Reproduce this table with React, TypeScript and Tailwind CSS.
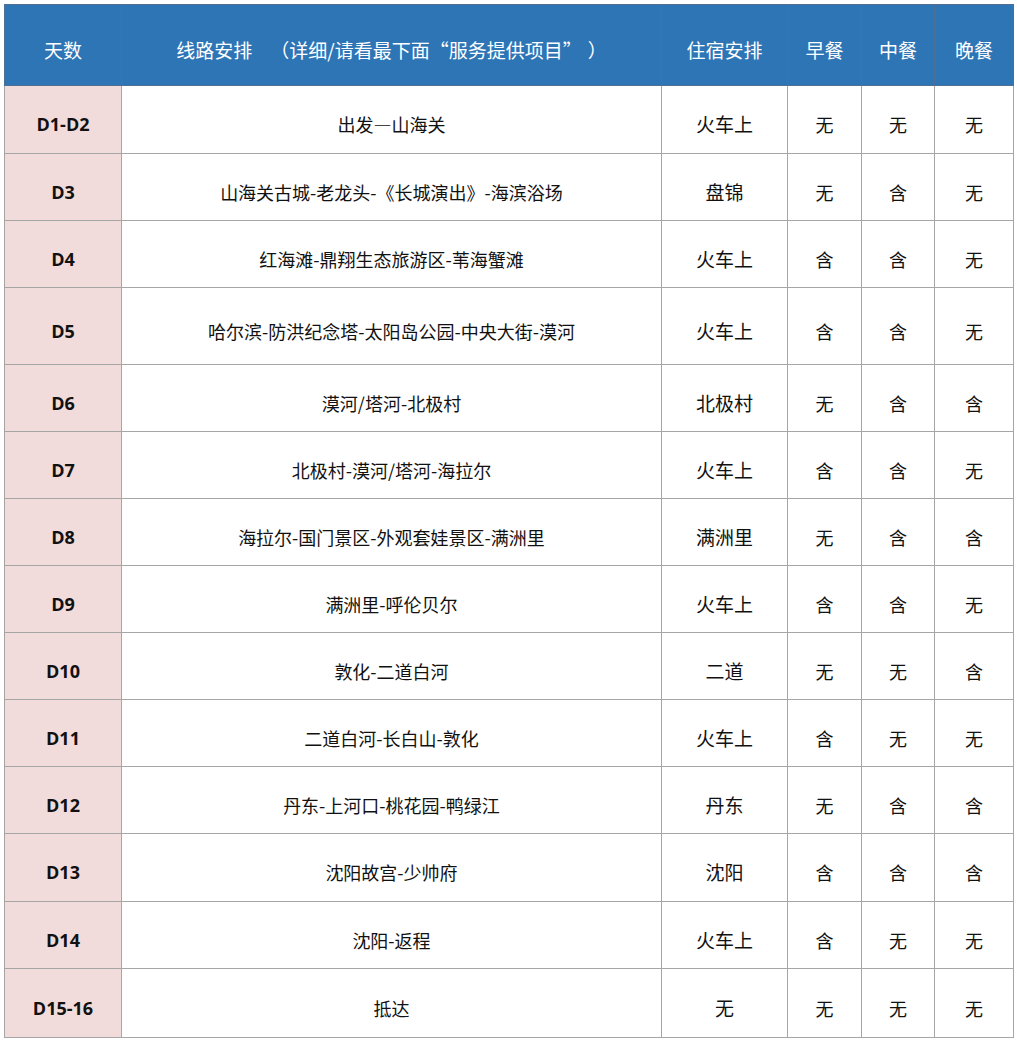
import React from "react"

type Row = {
  day: string
  route: string
  stay: string
  b: string
  l: string
  d: string
  h: string
}

const rows: Row[] = [
  { day: "D1-D2", route: "出发—山海关", stay: "火车上", b: "无", l: "无", d: "无", h: "h-[68px]" },
  { day: "D3", route: "山海关古城-老龙头-《长城演出》-海滨浴场", stay: "盘锦", b: "无", l: "含", d: "无", h: "h-[67px]" },
  { day: "D4", route: "红海滩-鼎翔生态旅游区-苇海蟹滩", stay: "火车上", b: "含", l: "含", d: "无", h: "h-[67px]" },
  { day: "D5", route: "哈尔滨-防洪纪念塔-太阳岛公园-中央大街-漠河", stay: "火车上", b: "含", l: "含", d: "无", h: "h-[77px]" },
  { day: "D6", route: "漠河/塔河-北极村", stay: "北极村", b: "无", l: "含", d: "含", h: "h-[67px]" },
  { day: "D7", route: "北极村-漠河/塔河-海拉尔", stay: "火车上", b: "含", l: "含", d: "无", h: "h-[67px]" },
  { day: "D8", route: "海拉尔-国门景区-外观套娃景区-满洲里", stay: "满洲里", b: "无", l: "含", d: "含", h: "h-[67px]" },
  { day: "D9", route: "满洲里-呼伦贝尔", stay: "火车上", b: "含", l: "含", d: "无", h: "h-[67px]" },
  { day: "D10", route: "敦化-二道白河", stay: "二道", b: "无", l: "无", d: "含", h: "h-[67px]" },
  { day: "D11", route: "二道白河-长白山-敦化", stay: "火车上", b: "含", l: "无", d: "无", h: "h-[67px]" },
  { day: "D12", route: "丹东-上河口-桃花园-鸭绿江", stay: "丹东", b: "无", l: "含", d: "含", h: "h-[67px]" },
  { day: "D13", route: "沈阳故宫-少帅府", stay: "沈阳", b: "含", l: "含", d: "含", h: "h-[68px]" },
  { day: "D14", route: "沈阳-返程", stay: "火车上", b: "含", l: "无", d: "无", h: "h-[67px]" },
  { day: "D15-16", route: "抵达", stay: "无", b: "无", l: "无", d: "无", h: "h-[69px]" },
]

// cells sit a few px low in the original, hence the top padding
const cell = "border border-[#a6a6a6] text-center align-middle pt-[10px] pb-0"
const cjk = "font-['Noto_Sans_CJK_SC',sans-serif]"
const headCell = `border border-[#4f6f95] text-center align-middle pt-[10px] pb-0 font-normal ${cjk}`

export default function App() {
  return (
    <div lang="zh-CN" className="bg-white w-[1017px] h-[1043px] p-[4px] font-['Open_Sans','Noto_Sans_CJK_SC',sans-serif] text-[#111]">
      <table className="border-collapse w-[1009px] table-fixed">
        <colgroup>
          <col className="w-[117px]" />
          <col className="w-[540px]" />
          <col className="w-[126px]" />
          <col className="w-[74px]" />
          <col className="w-[73px]" />
          <col className="w-[79px]" />
        </colgroup>
        <thead>
          <tr className="h-[81px] bg-[#2e75b6] text-white text-[19px]">
            <th className={headCell}>天数</th>
            <th className={headCell}>
              <span className="whitespace-pre">
                线路安排<span className="inline-block w-[18px]" />（详细/请看最下面
                <span className="inline-block w-[19px] text-right">“</span>服务提供项目
                <span className="inline-block w-[19px] text-left">”</span>
                <span className="inline-block w-[6px]" />）
              </span>
            </th>
            <th className={headCell}>住宿安排</th>
            <th className={headCell}>早餐</th>
            <th className={headCell}>中餐</th>
            <th className={headCell}>晚餐</th>
          </tr>
        </thead>
        <tbody>
          {rows.map((r) => (
            <tr key={r.day} className={r.h}>
              <td className={cell + " bg-[#f2dcdb] font-bold text-[18px]"}>{r.day}</td>
              <td className={`${cell} ${cjk} text-[18px]`}>{r.route}</td>
              <td className={`${cell} ${cjk} text-[19px]`}>{r.stay}</td>
              <td className={`${cell} ${cjk} text-[18px]`}>{r.b}</td>
              <td className={`${cell} ${cjk} text-[18px]`}>{r.l}</td>
              <td className={`${cell} ${cjk} text-[18px]`}>{r.d}</td>
            </tr>
          ))}
        </tbody>
      </table>
    </div>
  )
}
